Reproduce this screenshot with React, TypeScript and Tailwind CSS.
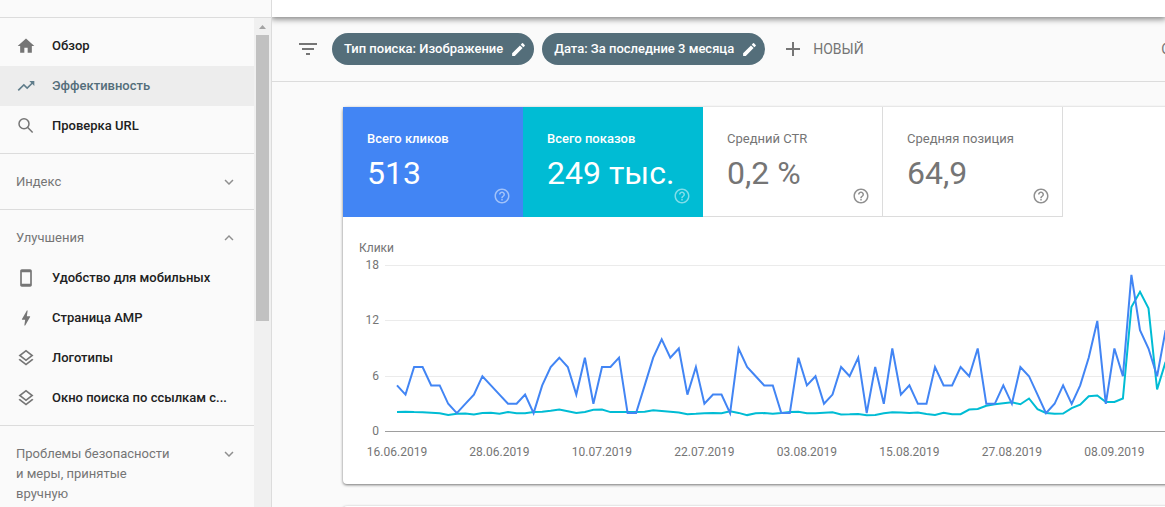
import type { ReactNode } from "react";
import {
  MdAdd,
  MdBolt,
  MdEdit,
  MdExpandLess,
  MdExpandMore,
  MdFilterList,
  MdHelpOutline,
  MdHome,
  MdOutlineLayers,
  MdTrendingUp,
} from "react-icons/md";

const clicks = [
  5, 4, 7, 7, 5, 5, 3, 2, 3, 4, 6, 5, 4, 3, 3, 4, 2, 5, 7, 8, 7, 4, 8, 3, 7, 7, 8, 2, 2, 5, 8, 10, 8, 9, 4, 7, 3, 4, 4,
  2, 9, 7, 6, 5, 5, 2, 2, 8, 5, 6, 3, 4, 7, 6, 8, 2, 7, 3, 9, 4, 5, 3, 3, 7, 5, 5, 7, 6, 9, 3, 3, 5, 3, 7, 6, 4, 2, 3,
  5, 3, 5, 8, 12, 3, 9, 6, 17, 11, 9, 6, 11,
];

const impressions = [
  2.1, 2.15, 2.1, 2.08, 2.03, 1.98, 1.8, 1.92, 1.95, 1.85, 2, 2.03, 1.93, 2.1, 1.98, 1.98, 2.1, 2.15, 2.25, 2.4, 2.2, 2,
  2.12, 2.35, 2.38, 2.1, 2.13, 2.13, 2.1, 2.15, 2.3, 2.22, 2.15, 2.07, 1.88, 1.92, 1.98, 2, 1.98, 2.2, 2.02, 1.78, 1.98,
  2, 1.92, 2, 2.1, 2.15, 1.98, 1.98, 2.03, 2.08, 1.85, 1.87, 1.9, 1.77, 1.8, 1.98, 2.08, 2.05, 2, 2.05, 1.9, 1.8, 2.03,
  1.88, 1.88, 2.37, 2.45, 2.8, 2.96, 3.07, 3.17, 2.95, 3.58, 2.42, 2.02, 1.92, 1.95, 2.53, 2.92, 3.83, 3.9, 3.2, 3.2,
  3.58, 13.5, 15.15, 13.35, 4.55, 7.55,
];

const dates = ["16.06.2019", "28.06.2019", "10.07.2019", "22.07.2019", "03.08.2019", "15.08.2019", "27.08.2019", "08.09.2019"];

const dayX = (day: number) => 54 + day * 8.54;
const valueY = (value: number) => 214.5 - value * 9.22;
const toPoints = (series: number[]) => series.map((v, i) => `${dayX(i).toFixed(1)},${valueY(v).toFixed(1)}`).join(" ");

function PhoneIcon() {
  return (
    <svg viewBox="0 0 24 24" className="size-5 fill-current" aria-hidden="true">
      <path d="M17 1.5H7c-1.1 0-2 .9-2 2v17c0 1.1.9 2 2 2h10c1.1 0 2-.9 2-2v-17c0-1.1-.9-2-2-2zM17 19H7V5h10v14z" />
    </svg>
  );
}

function SearchIcon() {
  return (
    <svg viewBox="0 0 24 24" className="size-5 fill-none stroke-current stroke-[1.8]" aria-hidden="true">
      <circle cx="9.6" cy="9.3" r="6" />
      <path d="M13.8 13.6 20 19.8" />
    </svg>
  );
}

function NavItem({ icon, label, active = false }: { icon: ReactNode; label: string; active?: boolean }) {
  return (
    <li>
      <a
        href="#"
        aria-current={active ? "page" : undefined}
        className={
          active
            ? "flex h-10 items-center gap-4 bg-[#ededed] pl-4 text-[13px] font-medium text-[#546e7a]"
            : "flex h-10 items-center gap-4 pl-4 text-[13px] font-medium text-[#212121]"
        }
      >
        <span className={active ? "text-[#607d8b]" : "text-[#757575]"}>{icon}</span>
        <span className="whitespace-nowrap">{label}</span>
      </a>
    </li>
  );
}

function SectionHeader({ label, open = false }: { label: string; open?: boolean }) {
  return (
    <button
      type="button"
      aria-expanded={open}
      className={
        open
          ? "flex w-full items-start justify-between px-4 pt-[18px] pb-[10px] text-left text-[13px] leading-5 text-[#757575]"
          : "flex w-full items-start justify-between px-4 pt-[18px] pb-[17px] text-left text-[13px] leading-5 text-[#757575]"
      }
    >
      <span className="max-w-[160px]">{label}</span>
      <span className="pt-px text-[#8f8f8f]">{open ? <MdExpandLess size={18} /> : <MdExpandMore size={18} />}</span>
    </button>
  );
}

function Sidebar() {
  return (
    <aside className="flex w-[272px] shrink-0 flex-col border-r border-[#dcdcdc]">
      <div className="h-[18px] shrink-0 border-b border-[#dcdcdc]" />
      <div className="flex min-h-0 flex-1">
        <nav className="min-w-0 flex-1 overflow-hidden">
          <ul className="border-b border-[#dcdcdc] pt-2 pb-[7px]">
            <NavItem icon={<MdHome size={20} />} label="Обзор" />
            <NavItem icon={<MdTrendingUp size={20} />} label="Эффективность" active />
            <NavItem icon={<SearchIcon />} label="Проверка URL" />
          </ul>
          <div className="border-b border-[#dcdcdc]">
            <SectionHeader label="Индекс" />
          </div>
          <div className="border-b border-[#dcdcdc] pb-[7px]">
            <SectionHeader label="Улучшения" open />
            <ul>
              <NavItem icon={<PhoneIcon />} label="Удобство для мобильных" />
              <NavItem icon={<MdBolt size={20} />} label="Страница AMP" />
              <NavItem icon={<MdOutlineLayers size={20} />} label="Логотипы" />
              <NavItem icon={<MdOutlineLayers size={20} />} label="Окно поиска по ссылкам с..." />
            </ul>
          </div>
          <SectionHeader label="Проблемы безопасности и меры, принятые вручную" />
        </nav>
        <div className="flex w-[17px] shrink-0 flex-col items-center bg-[#f0f0f0]" aria-hidden="true">
          <svg viewBox="0 0 17 17" className="size-[17px] fill-[#a3a3a3]">
            <path d="M5 11 8.5 7 12 11z" />
          </svg>
          <div className="h-[286px] w-[13px] bg-[#c1c1c1]" />
        </div>
      </div>
    </aside>
  );
}

function FilterChip({ label }: { label: string }) {
  return (
    <button
      type="button"
      className="flex h-8 items-center gap-[7px] rounded-full bg-[#546e7a] pr-[7px] pl-3 text-[13px] font-medium whitespace-nowrap text-white"
    >
      {label}
      <MdEdit size={17} />
    </button>
  );
}

function Metric({ label, value, tone }: { label: string; value: string; tone: "blue" | "cyan" | "plain" }) {
  const tones = {
    blue: "bg-[#4285f4] text-white",
    cyan: "bg-[#00bcd4] text-white",
    plain: "border-r border-b border-[#dcdcdc] text-[#757575]",
  };
  return (
    <button type="button" className={`flex h-[110px] w-[180px] flex-col items-start pt-[22px] pl-6 text-left ${tones[tone]}`}>
      <span className={tone === "plain" ? "text-[13px] leading-5" : "text-[13px] leading-5 font-medium"}>{label}</span>
      <span className="mt-1 text-[32px] leading-10 whitespace-nowrap">{value}</span>
      <span className={tone === "plain" ? "mt-[-6px] mr-3 self-end opacity-80" : "mt-[-6px] mr-3 self-end opacity-50"}>
        <MdHelpOutline size={18} />
      </span>
    </button>
  );
}

function Chart() {
  return (
    <svg width="900" height="267" className="block fill-[#757575] text-[12px]" role="img" aria-label="Клики">
      <text x="16" y="35">Клики</text>
      {[18, 12, 6, 0].map((tick, i) => (
        <g key={tick}>
          <text x="36" y={[52, 107, 163, 218][i]} textAnchor="end">{tick}</text>
          <rect x="42" y={[48, 103, 159, 214][i]} width="858" height="1" className={tick ? "fill-[#ebebeb]" : "fill-[#9e9e9e]"} />
        </g>
      ))}
      {dates.map((date, i) => (
        <text key={date} x={dayX(i * 12)} y="239" textAnchor="middle">{date}</text>
      ))}
      <polyline points={toPoints(impressions)} className="fill-none stroke-[#00bcd4] stroke-2" />
      <polyline points={toPoints(clicks)} className="fill-none stroke-[#4285f4] stroke-2" />
    </svg>
  );
}

export default function App() {
  return (
    <div className="flex h-screen overflow-hidden bg-[#fafafa] font-['Roboto',sans-serif]">
      <Sidebar />
      <div className="flex min-w-0 flex-1 flex-col overflow-hidden">
        <header className="z-10 h-[17px] shrink-0 bg-white shadow-[0_1px_6px_1px_rgba(0,0,0,0.5)]" />
        <div className="flex h-[65px] shrink-0 items-center border-b border-[#dcdcdc] pl-6">
          <MdFilterList size={24} className="mr-3 shrink-0 text-[#757575]" />
          <div className="flex gap-2">
            <FilterChip label="Тип поиска: Изображение" />
            <FilterChip label="Дата: За последние 3 месяца" />
          </div>
          <button type="button" className="ml-4 flex items-center gap-2 text-[14px] text-[#757575]">
            <MdAdd size={24} />
            НОВЫЙ
          </button>
          <span className="-mr-1.5 ml-auto text-[14px] text-[#757575]">О</span>
        </div>
        <main className="flex flex-col gap-[22px] pt-[25px] pl-[71px]">
          <section className="min-w-[900px] rounded-sm bg-white shadow-[0_1px_3px_rgba(0,0,0,0.55)]">
            <div className="flex">
              <Metric label="Всего кликов" value="513" tone="blue" />
              <Metric label="Всего показов" value="249 тыс." tone="cyan" />
              <Metric label="Средний CTR" value="0,2 %" tone="plain" />
              <Metric label="Средняя позиция" value="64,9" tone="plain" />
            </div>
            <Chart />
          </section>
          <section className="h-40 min-w-[900px] rounded-sm bg-white shadow-[0_1px_3px_rgba(0,0,0,0.55)]" />
        </main>
      </div>
    </div>
  );
}
